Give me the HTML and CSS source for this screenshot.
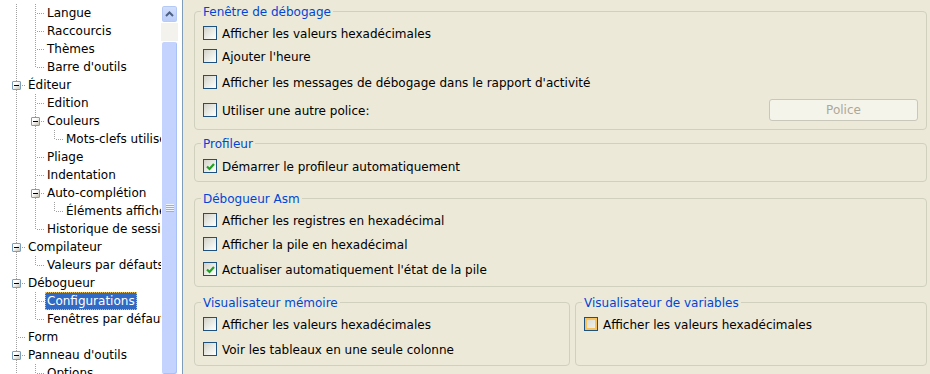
FILE: index.html
```html
<!DOCTYPE html>
<html lang="fr">
<head>
<meta charset="utf-8">
<title>Options - Débogueur</title>
<link rel="stylesheet" href="styles.css">
</head>
<body>
<div class="window">
  <div class="tree-panel">
    <div class="tree">
      <div class="row"><span class="cell v"></span><span class="cell t"></span><span class="label">Langue</span></div>
      <div class="row"><span class="cell v"></span><span class="cell t"></span><span class="label">Raccourcis</span></div>
      <div class="row"><span class="cell v"></span><span class="cell t"></span><span class="label">Thèmes</span></div>
      <div class="row"><span class="cell v"></span><span class="cell l"></span><span class="label">Barre d'outils</span></div>
      <div class="row"><span class="cell t"><span class="exp"></span></span><span class="label">Éditeur</span></div>
      <div class="row"><span class="cell v"></span><span class="cell t"></span><span class="label">Edition</span></div>
      <div class="row"><span class="cell v"></span><span class="cell t"><span class="exp"></span></span><span class="label">Couleurs</span></div>
      <div class="row"><span class="cell v"></span><span class="cell v"></span><span class="cell l"></span><span class="label">Mots-clefs utilisés</span></div>
      <div class="row"><span class="cell v"></span><span class="cell t"></span><span class="label">Pliage</span></div>
      <div class="row"><span class="cell v"></span><span class="cell t"></span><span class="label">Indentation</span></div>
      <div class="row"><span class="cell v"></span><span class="cell t"><span class="exp"></span></span><span class="label">Auto-complétion</span></div>
      <div class="row"><span class="cell v"></span><span class="cell v"></span><span class="cell l"></span><span class="label">Éléments affichés</span></div>
      <div class="row"><span class="cell v"></span><span class="cell l"></span><span class="label">Historique de session</span></div>
      <div class="row"><span class="cell t"><span class="exp"></span></span><span class="label">Compilateur</span></div>
      <div class="row"><span class="cell v"></span><span class="cell l"></span><span class="label">Valeurs par défauts</span></div>
      <div class="row"><span class="cell t"><span class="exp"></span></span><span class="label">Débogueur</span></div>
      <div class="row"><span class="cell v"></span><span class="cell t"></span><span class="label selected">Configurations</span></div>
      <div class="row"><span class="cell v"></span><span class="cell l"></span><span class="label">Fenêtres par défaut</span></div>
      <div class="row"><span class="cell t"></span><span class="label">Form</span></div>
      <div class="row"><span class="cell t"><span class="exp"></span></span><span class="label">Panneau d'outils</span></div>
      <div class="row"><span class="cell v"></span><span class="cell t"></span><span class="label">Options</span></div>
    </div>
    <div class="vscroll">
      <div class="sb-btn">
        <svg width="9" height="6" viewBox="0 0 9 6"><path d="M1 5 L4.5 1.5 L8 5" fill="none" stroke="#4D6185" stroke-width="2"/></svg>
      </div>
      <div class="sb-track"></div>
      <div class="sb-thumb"><div class="grip"></div></div>
    </div>
  </div>

  <div class="options">
    <div class="group g1">
      <div class="group-title">Fenêtre de débogage</div>
      <div class="cb-row m6"><span class="cb"></span><span class="cb-label">Afficher les valeurs hexadécimales</span></div>
      <div class="cb-row m5"><span class="cb"></span><span class="cb-label">Ajouter l'heure</span></div>
      <div class="cb-row m8"><span class="cb"></span><span class="cb-label">Afficher les messages de débogage dans le rapport d'activité</span></div>
      <div class="cb-row tall m8"><span class="cb"></span><span class="cb-label">Utiliser une autre police:</span><button class="xp-btn" disabled>Police</button></div>
    </div>

    <div class="group g2">
      <div class="group-title">Profileur</div>
      <div class="cb-row m7"><span class="cb checked"><svg width="9" height="9" viewBox="0 0 9 9"><path d="M1 4.5 L3.5 7 L8 2" fill="none" stroke="#21A121" stroke-width="2.2"/></svg></span><span class="cb-label">Démarrer le profileur automatiquement</span></div>
    </div>

    <div class="group g3">
      <div class="group-title">Débogueur Asm</div>
      <div class="cb-row m6"><span class="cb"></span><span class="cb-label">Afficher les registres en hexadécimal</span></div>
      <div class="cb-row m6"><span class="cb"></span><span class="cb-label">Afficher la pile en hexadécimal</span></div>
      <div class="cb-row m7"><span class="cb checked"><svg width="9" height="9" viewBox="0 0 9 9"><path d="M1 4.5 L3.5 7 L8 2" fill="none" stroke="#21A121" stroke-width="2.2"/></svg></span><span class="cb-label">Actualiser automatiquement l'état de la pile</span></div>
    </div>

    <div class="group-pair">
      <div class="group g4">
        <div class="group-title">Visualisateur mémoire</div>
        <div class="cb-row m6"><span class="cb"></span><span class="cb-label">Afficher les valeurs hexadécimales</span></div>
        <div class="cb-row m7"><span class="cb"></span><span class="cb-label">Voir les tableaux en une seule colonne</span></div>
      </div>
      <div class="group g4">
        <div class="group-title">Visualisateur de variables</div>
        <div class="cb-row m6"><span class="cb hot"></span><span class="cb-label">Afficher les valeurs hexadécimales</span></div>
      </div>
    </div>
  </div>
</div>
</body>
</html>
```
FILE: styles.css
```css
html, body {
  margin: 0;
  padding: 0;
}
body {
  width: 930px;
  height: 374px;
  overflow: hidden;
  background: #ECE9D8;
  font-family: "DejaVu Sans", "Liberation Sans", sans-serif;
  font-size: 12px;
  color: #000;
}
.window {
  display: flex;
  height: 374px;
}

/* ---------- tree ---------- */
.tree-panel {
  display: flex;
  flex: none;
  width: 180px;
  height: 374px;
  background: #fff;
  padding-right: 2px;
  border-right: 1px solid #7F9DB9;
  overflow: hidden;
}
.tree {
  width: 154px;
  flex: none;
  padding: 4px 0 0 7px;
  overflow: hidden;
}
.row {
  display: flex;
  align-items: center;
  height: 18px;
  white-space: nowrap;
}
.cell {
  flex: none;
  width: 19px;
  height: 18px;
  display: flex;
  align-items: center;
  justify-content: center;
  background-repeat: no-repeat;
}
.v {
  background-image: repeating-linear-gradient(to bottom, #A0A0A0 0 1px, transparent 1px 2px);
  background-size: 1px 18px;
  background-position: 9px 0;
}
.t {
  background-image:
    repeating-linear-gradient(to bottom, #A0A0A0 0 1px, transparent 1px 2px),
    repeating-linear-gradient(to right, #A0A0A0 0 1px, transparent 1px 2px);
  background-size: 1px 18px, 8px 1px;
  background-position: 9px 0, 11px 9px;
}
.l {
  background-image:
    repeating-linear-gradient(to bottom, #A0A0A0 0 1px, transparent 1px 2px),
    repeating-linear-gradient(to right, #A0A0A0 0 1px, transparent 1px 2px);
  background-size: 1px 9px, 8px 1px;
  background-position: 9px 0, 11px 9px;
}
.exp {
  width: 9px;
  height: 9px;
  box-sizing: border-box;
  border: 1px solid #7B9EBD;
  border-radius: 1px;
  background:
    linear-gradient(#000, #000) center / 5px 1px no-repeat,
    linear-gradient(135deg, #FFFFFF 35%, #C6C2B2);
}
.label {
  line-height: 15px;
  padding: 1px 1px 0;
  border: 1px solid transparent;
}
.label.selected {
  background: #316AC5;
  color: #fff;
  border: 1px dotted #E8C060;
}

/* ---------- scrollbar ---------- */
.vscroll {
  flex: none;
  width: 17px;
  display: flex;
  flex-direction: column;
  padding-top: 5px;
  background: #fff;
}
.sb-btn {
  flex: none;
  height: 18px;
  box-sizing: border-box;
  border: 1px solid #FFFFFF;
  border-radius: 3px;
  background: linear-gradient(#D4E0FD, #B9CCF8);
  box-shadow: inset 0 0 0 1px #B5C9F6;
  display: flex;
  align-items: center;
  justify-content: center;
}
.sb-track {
  flex: none;
  height: 18px;
  background: #F3F2EC;
}
.sb-thumb {
  flex: none;
  height: 334px;
  box-sizing: border-box;
  border: 1px solid #FFFFFF;
  border-radius: 3px;
  background: #C3D3FD;
  box-shadow: inset -1px -1px 0 #A9C1F6;
  display: flex;
  align-items: center;
  justify-content: center;
}
.grip {
  width: 8px;
  height: 8px;
  background: repeating-linear-gradient(to bottom, #EEF4FE 0 1px, #8CB0F8 1px 2px);
}

/* ---------- option groups ---------- */
.options {
  flex: 1;
  padding: 0 3px 0 11px;
}
.group {
  border: 1px solid #D0D0BF;
  border-radius: 4px;
  padding: 0 8px;
}
.g1 { margin-top: 11px; padding-bottom: 8px; }
.g2 { margin-top: 13px; padding-bottom: 6px; }
.g3 { margin-top: 16px; padding-bottom: 8px; }
.group-pair {
  display: grid;
  grid-template-columns: 376px 1fr;
  column-gap: 5px;
  margin-top: 15px;
}
.g4 { padding-bottom: 7px; }
.group-title {
  width: fit-content;
  margin: -7px 0 0 -2px;
  padding: 0 2px;
  line-height: 14px;
  height: 13px;
  color: #0046D5;
  background: #ECE9D8;
}
.cb-row {
  display: flex;
  align-items: center;
  height: 18px;
  white-space: nowrap;
}
.cb-row.tall { height: 22px; }
.m5 { margin-top: 5px; }
.m6 { margin-top: 6px; }
.m7 { margin-top: 7px; }
.m8 { margin-top: 8px; }
.cb {
  flex: none;
  width: 14px;
  height: 14px;
  box-sizing: border-box;
  border: 1px solid #1C5180;
  background: linear-gradient(135deg, #D2D2CA 0%, #E8E8E2 45%, #FFFFFF 100%);
  display: flex;
  align-items: center;
  justify-content: center;
}
.cb.hot {
  box-shadow: inset 0 0 0 2px #F9C25A;
  background: linear-gradient(135deg, #D8D8D0, #F4F4F0);
}
.cb-label {
  margin-left: 5px;
  padding-top: 1px;
}
.xp-btn {
  margin-left: auto;
  width: 149px;
  height: 22px;
  box-sizing: border-box;
  border: 1px solid #C9C7BA;
  border-radius: 3px;
  background: #F5F4EA;
  color: #ACA899;
  font: inherit;
  padding: 0;
}
```
